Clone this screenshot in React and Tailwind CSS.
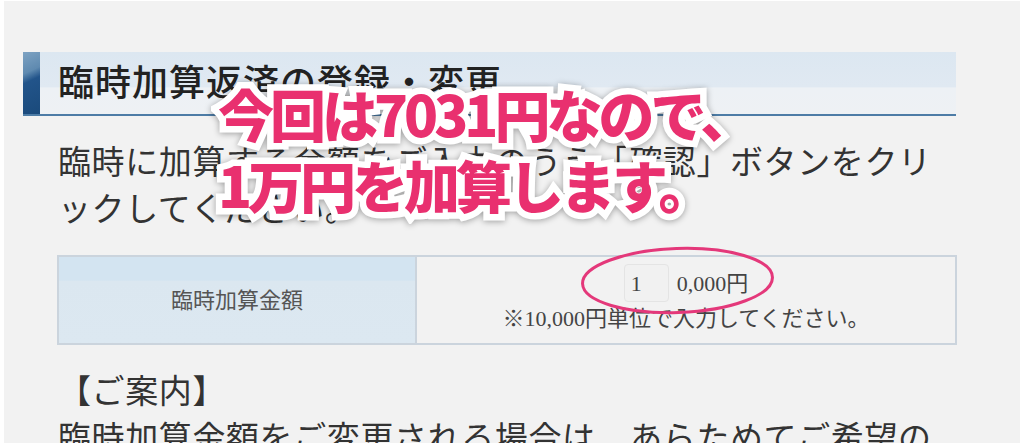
import React from 'react';

const Heading = () => (
  <div className="flex h-[64px] w-[933px] border-b-2 border-[#4d7ca6] bg-[linear-gradient(to_bottom,#dce7f1_0%,#e0e9f2_56%,#edf1f5_58%,#eef1f4_100%)]">
    <div className="w-[17px] bg-[linear-gradient(155deg,#7ea3c3_0%,#5f8ab0_32%,#22548a_46%,#1a4a7b_100%)]" />
    <h1 className="flex items-center pl-[18px] pt-[2px] text-[36px] font-medium tracking-[1px] text-[#222]">
      臨時加算返済の登録・変更
    </h1>
  </div>
);

const AmountTable = () => (
  <div className="ml-[34px] mt-[21px] flex h-[90px] w-[900px] border-2 border-[#cbd4dd]">
    <div className="flex w-[358px] items-center justify-center border-r-2 border-[#cbd4dd] bg-[linear-gradient(to_bottom,#d3e4f1_0%,#d3e4f1_27%,#dbe7f0_28%,#dce8f1_100%)]">
      <span className="text-[22px] text-[#555]">臨時加算金額</span>
    </div>
    <div className="flex flex-1 flex-col items-center pt-[7px] text-[#444]">
      <div className="flex items-center gap-2">
        <div className="flex h-[38px] w-[45px] items-center rounded-[4px] border border-[#e4e4e4] bg-[#f1f1f1] pl-[6px] text-[22px]">
          1
        </div>
        <span className="text-[22px]">0,000円</span>
      </div>
      <p className="text-[22px] leading-[34px]">※10,000円単位で入力してください。</p>
    </div>
  </div>
);

export default function App() {
  return (
    <div className="h-[443px] w-[1024px] overflow-hidden bg-white px-1 pt-px font-['Liberation_Serif','Noto_Sans_CJK_JP',serif] text-[#333]">
      <div className="relative h-full bg-[#f2f2f2] pl-[19px] pt-[51px]">
        <Heading />

        <p className="mt-[24px] pl-[35px] text-[33px] leading-[47px] tracking-[0.6px]">
          <span className="block whitespace-nowrap">臨時に加算する金額をご入力のうえ「確認」ボタンをクリ</span>
          <span className="block whitespace-nowrap">ックしてください。</span>
        </p>

        <AmountTable />

        <div className="mt-[24px] pl-[35px] text-[33px] leading-[47px] tracking-[0.6px]">
          <p>【ご案内】</p>
          <p className="whitespace-nowrap">臨時加算金額をご変更される場合は、あらためてご希望の</p>
        </div>

        {/* hand-drawn circle around the input */}
        <svg className="absolute left-[574px] top-[244px]" width="200" height="72" viewBox="0 0 200 72">
          <ellipse cx="99.5" cy="35.5" rx="95" ry="32" fill="none" stroke="#e4387a" strokeWidth="3" transform="rotate(-2 99.5 35.5)" />
        </svg>

        {/* caption overlay */}
        <div className="absolute left-[214px] top-[76px] font-['Noto_Sans_CJK_JP',sans-serif] text-[56px] font-black leading-[71px] tracking-[-4px] text-[#e9306f] [paint-order:stroke_fill] [-webkit-text-stroke:13px_white] drop-shadow-[0_1px_3px_rgba(0,0,0,0.35)]">
          <p className="whitespace-nowrap">今回は7031円なので、</p>
          <p className="whitespace-nowrap">1万円を加算します。</p>
        </div>
      </div>
    </div>
  );
}
